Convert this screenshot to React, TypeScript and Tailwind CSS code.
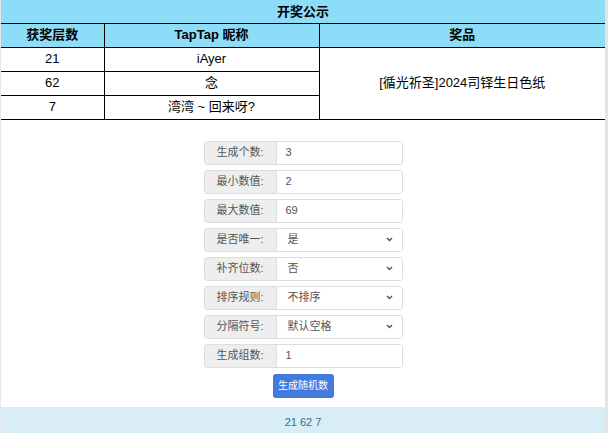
import React from 'react';

const rows = [
  { label: '生成个数:', value: '3', select: false },
  { label: '最小数值:', value: '2', select: false },
  { label: '最大数值:', value: '69', select: false },
  { label: '是否唯一:', value: '是', select: true },
  { label: '补齐位数:', value: '否', select: true },
  { label: '排序规则:', value: '不排序', select: true },
  { label: '分隔符号:', value: '默认空格', select: true },
  { label: '生成组数:', value: '1', select: false },
];

const Chevron = () => (
  <svg width="7" height="5" viewBox="0 0 7 5" className="text-gray-600">
    <path d="M1 1l2.5 2.5L6 1" fill="none" stroke="currentColor" strokeWidth="1.4" />
  </svg>
);

export default function App() {
  const font = { fontFamily: '"Liberation Sans", "Noto Sans CJK SC", sans-serif' };
  return (
    <div className="w-[608px] h-[433px] overflow-hidden bg-white flex" style={font}>
      <div className="flex-1 flex flex-col border-l border-gray-200">
        <table className="w-full border-collapse text-[13px] text-black">
          <thead>
            <tr className="bg-[#8ddcf8] h-[23px]">
              <th colSpan={3} className="font-bold text-[13px] border-b border-black">开奖公示</th>
            </tr>
            <tr className="bg-[#8ddcf8] h-[24px]">
              <th className="w-[103px] border border-black border-l-0 font-bold">获奖层数</th>
              <th className="w-[215px] border border-black font-bold">TapTap 昵称</th>
              <th className="border border-black border-r-0 font-bold">奖品</th>
            </tr>
          </thead>
          <tbody className="text-center">
            <tr className="h-[24px]">
              <td className="border border-black border-l-0">21</td>
              <td className="border border-black">iAyer</td>
              <td rowSpan={3} className="border border-black border-r-0">[循光祈圣]2024司铎生日色纸</td>
            </tr>
            <tr className="h-[24px]">
              <td className="border border-black border-l-0">62</td>
              <td className="border border-black">念</td>
            </tr>
            <tr className="h-[24px]">
              <td className="border border-black border-l-0">7</td>
              <td className="border border-black">湾湾 ~ 回来呀?</td>
            </tr>
          </tbody>
        </table>

        <div className="flex flex-col items-center pt-[21px] gap-[5px] text-[11px]">
          {rows.map((r) => (
            <div key={r.label} className="w-[199px] h-[24px] flex border border-[#ddd] rounded-[3px] overflow-hidden">
              <div className="w-[72px] bg-[#eee] border-r border-[#ddd] flex items-center justify-center text-[#555]">
                {r.label}
              </div>
              <div className="flex-1 flex items-center justify-between px-[9px] text-[#555] bg-white">
                <span className={r.select ? 'pl-[2px]' : ''}>{r.value}</span>
                {r.select && <Chevron />}
              </div>
            </div>
          ))}
          <button className="mt-[1px] w-[61px] h-[24px] rounded-[3px] bg-[#4479de] text-white text-[10px]">
            生成随机数
          </button>
        </div>

        <div className="mt-[9px] flex-1 bg-[#d9edf7] text-[#31708f] text-[11px] flex justify-center pt-[7px]">
          21 62 7
        </div>
      </div>
      <div className="w-[3px] bg-[#e5e5e5]" />
    </div>
  );
}
